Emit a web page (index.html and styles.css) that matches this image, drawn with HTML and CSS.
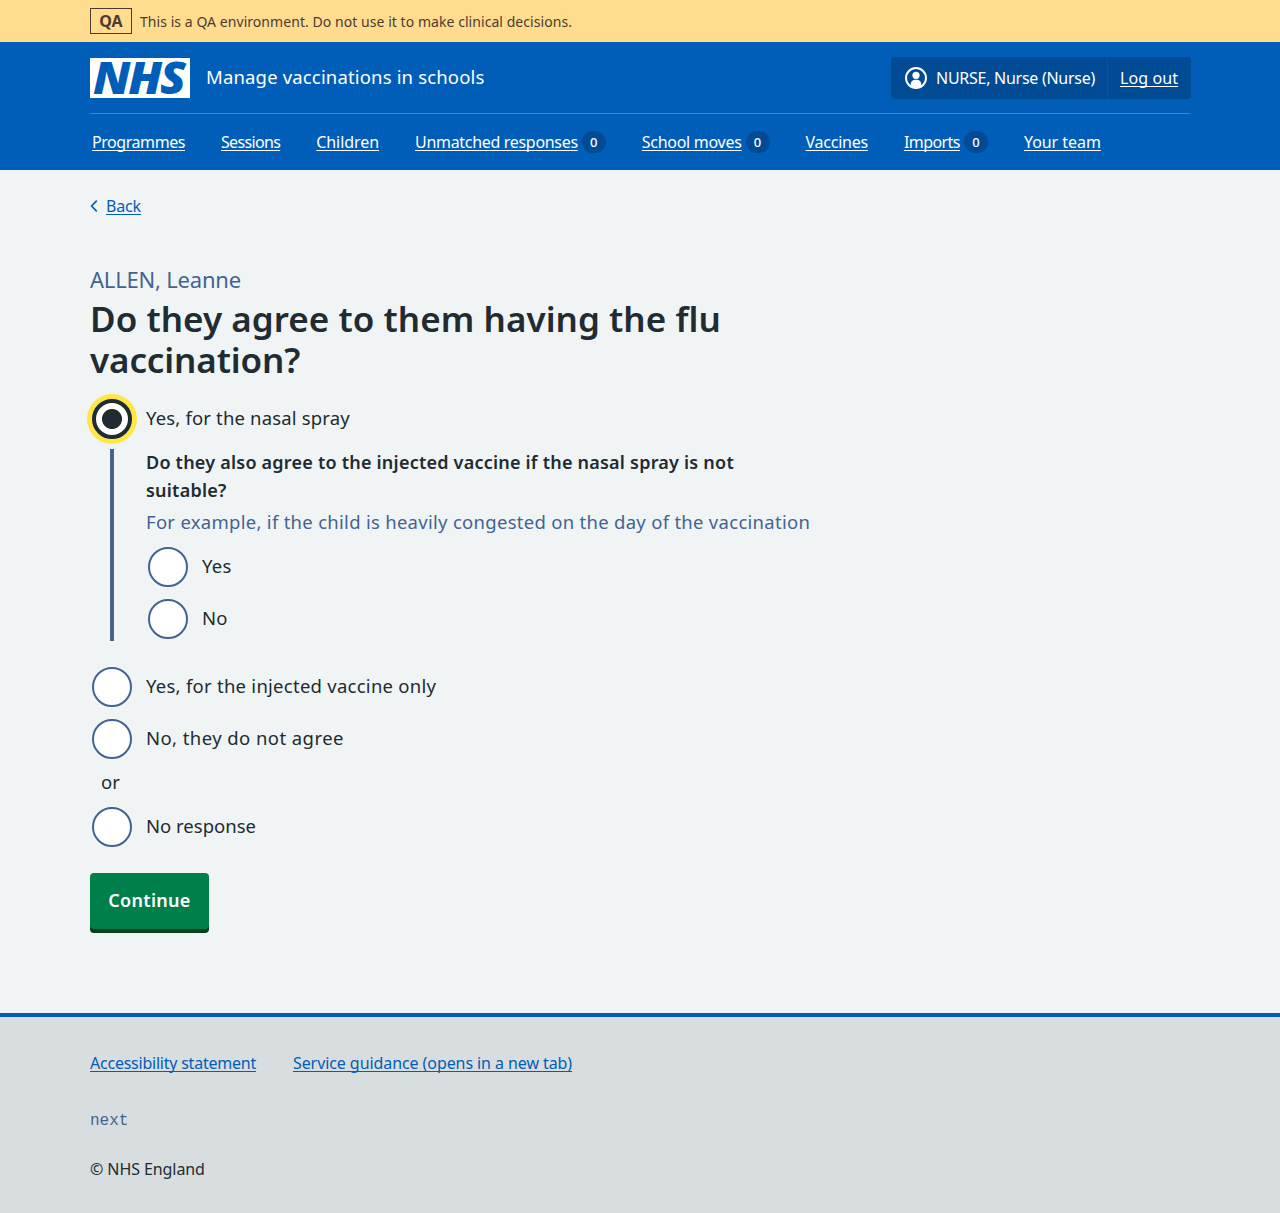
FILE: index.html
```html
<!DOCTYPE html>
<html lang="en">
<head>
<meta charset="utf-8">
<title>Do they agree to them having the flu vaccination?</title>
<link rel="stylesheet" href="styles.css">
</head>
<body>
<div class="env">
  <div class="container env-inner">
    <strong class="env-tag">QA</strong>
    <span class="env-text">This is a QA environment. Do not use it to make clinical decisions.</span>
  </div>
</div>
<header class="header">
  <div class="container">
    <div class="header-top">
      <svg class="logo" viewBox="0 0 100 40" width="100" height="40" role="img" aria-label="NHS">
        <rect width="100" height="40" fill="#fff"/>
        <text class="logo-text" x="3" y="36" textLength="91" lengthAdjust="spacingAndGlyphs">NHS</text>
      </svg>
      <span class="service">Manage vaccinations in schools</span>
      <div class="account">
        <div class="account-user">
          <svg width="22" height="22" viewBox="0 0 22 22" aria-hidden="true">
            <circle cx="11" cy="11" r="10" fill="none" stroke="#fff" stroke-width="2"/>
            <circle cx="11" cy="8.3" r="3.6" fill="#fff"/>
            <path d="M5.8 19.500V17a4.200 4.200 0 0 1 4.200-4.200h2a4.200 4.200 0 0 1 4.200 4.200v2.500L11 21.500z" fill="#fff"/>
          </svg>
          <span class="account-name">NURSE, Nurse (Nurse)</span>
        </div>
        <a class="account-out" href="#">Log out</a>
      </div>
    </div>
    <nav class="nav">
      <span class="nav-item"><a class="n1" href="#">Programmes</a></span>
      <span class="nav-item"><a class="n2" href="#">Sessions</a></span>
      <span class="nav-item"><a class="n3" href="#">Children</a></span>
      <span class="nav-item"><a class="n4" href="#">Unmatched responses</a><span class="count">0</span></span>
      <span class="nav-item"><a class="n5" href="#">School moves</a><span class="count">0</span></span>
      <span class="nav-item"><a class="n6" href="#">Vaccines</a></span>
      <span class="nav-item"><a class="n7" href="#">Imports</a><span class="count">0</span></span>
      <span class="nav-item"><a class="n8" href="#">Your team</a></span>
    </nav>
  </div>
</header>
<main class="container main">
  <div class="back">
    <svg width="8" height="12" viewBox="0 0 8 12" aria-hidden="true"><path d="M6.300 1.200 1.500 6l4.800 4.800" fill="none" stroke="#005eb8" stroke-width="1.700" stroke-linecap="round" stroke-linejoin="round"/></svg>
    <a href="#">Back</a>
  </div>
  <form class="form">
    <span class="caption">ALLEN, Leanne</span>
    <h1 class="title">Do they agree to them having the flu <span class="title-end">vaccination?</span></h1>
    <div class="radios">
      <label class="radio"><span class="dot dot-checked"></span><span class="label r1">Yes, for the nasal spray</span></label>
      <div class="conditional">
        <h2 class="question">Do they also agree to the injected vaccine if the nasal spray is not suitable?</h2>
        <div class="hint">For example, if the child is heavily congested on the day of the vaccination</div>
        <div class="nested">
          <label class="radio"><span class="dot"></span><span class="label">Yes</span></label>
          <label class="radio"><span class="dot"></span><span class="label">No</span></label>
        </div>
      </div>
      <label class="radio"><span class="dot"></span><span class="label r2">Yes, for the injected vaccine only</span></label>
      <label class="radio"><span class="dot"></span><span class="label r3">No, they do not agree</span></label>
      <div class="or">or</div>
      <label class="radio"><span class="dot"></span><span class="label r4">No response</span></label>
    </div>
    <button class="button" type="button">Continue</button>
  </form>
</main>
<footer class="footer">
  <div class="container">
    <div class="footer-links">
      <a class="f1" href="#">Accessibility statement</a>
      <a class="f2" href="#">Service guidance (opens in a new tab)</a>
    </div>
    <div class="version">next</div>
    <div class="copyright">© NHS England</div>
  </div>
</footer>
</body>
</html>
```
FILE: styles.css
```css
* { box-sizing: border-box; }
body {
  margin: 0;
  background: #f0f4f5;
  color: #212b32;
  font-family: "Noto Sans", "Open Sans", sans-serif;
  font-size: 18.5px;
  line-height: 28px;
}
a { color: #005eb8; text-underline-offset: 2px; text-decoration-thickness: 1px; text-decoration-skip-ink: none; }
.container { width: 1100px; margin: 0 auto; white-space: nowrap; }

.env { background: #ffdc8e; color: #4d3b33; }
.env-inner { display: flex; align-items: center; gap: 8px; height: 42px; }
.env-tag {
  width: 42px; height: 26px; border: 1px solid #4d3b33;
  font-size: 16px; font-weight: 700; line-height: 25px; text-align: center;
}
.env-text { padding-top: 2px; font-size: 14px; line-height: 20px; letter-spacing: .055px; }

.header { background: #005eb8; color: #fff; height: 128px; }
.header a { color: #fff; }
.header-top { display: flex; align-items: center; height: 72px; border-bottom: 1px solid #3d84cb; }
.logo { display: block; overflow: visible; }
.logo-text { font: italic 800 45px "Open Sans", sans-serif; letter-spacing: -2px; fill: #005eb8; }
.service { margin-left: 16px; padding-bottom: 2px; letter-spacing: .16px; }
.account {
  display: flex; height: 42px; margin: 0 -1px 0 auto; width: 300px;
  background: #004b93; border-radius: 4px; font-size: 16px;
}
.account-user { display: flex; align-items: center; gap: 9px; padding-left: 14px; width: 217px; border-right: 1px solid #0055a6; }
.account-name { letter-spacing: -.27px; }
.account-out { padding-left: 12px; line-height: 42px; letter-spacing: .1px; }

.nav { display: flex; gap: 36px; padding-left: 2px; height: 56px; align-items: center; font-size: 16px; }
.nav-item { display: flex; align-items: center; gap: 4px; }
.n1 { letter-spacing: -.44px; }
.n2 { letter-spacing: -.66px; }
.n3 { letter-spacing: -.06px; }
.n4 { letter-spacing: -.31px; }
.n5 { letter-spacing: -.28px; }
.n6 { letter-spacing: -.25px; }
.n7 { letter-spacing: -.56px; }
.n8 { letter-spacing: -.05px; }
.count {
  width: 24px; height: 22px; border-radius: 11px; background: #004b93;
  font-size: 13px; font-weight: 500; line-height: 23px; text-align: center;
}

.main { height: 843px; padding-top: 22px; }
.back { display: flex; align-items: center; gap: 8px; font-size: 16px; letter-spacing: -.15px; }
.form { padding-top: 43px; }
.caption { display: block; font-size: 22px; line-height: 32px; letter-spacing: -.2px; color: #436490; }
.title {
  width: 700px; margin: 3px 0 19px; white-space: normal;
  font-size: 35px; line-height: 41px; font-weight: 600; letter-spacing: .05px;
}
.title-end { letter-spacing: -.12px; }

.radio { display: flex; align-items: center; gap: 14px; height: 40px; margin: 0 0 12px 2px; }
.label { padding-bottom: 2px; letter-spacing: .26px; }
.r1 { letter-spacing: .16px; }
.r3 { letter-spacing: .43px; }
.r4 { letter-spacing: 0; }
.dot { flex: none; width: 40px; height: 40px; border: 2px solid #436490; border-radius: 50%; background: #fff; }
.dot-checked {
  border: 4px solid #212b32;
  background: radial-gradient(circle, #212b32 9.600px, #fff 10.400px);
  box-shadow: 0 0 0 5px #ffe642;
}
.conditional {
  display: flex; flex-direction: column; height: 192px; margin: -2px 0 26px 20px;
  border-left: 4px solid #436490; padding-left: 32px;
}
.question {
  width: 640px; margin: -1px 0 0; white-space: normal;
  font-size: 18px; line-height: 28px; font-weight: 600; letter-spacing: .22px;
}
.hint { margin-top: 4px; color: #436490; letter-spacing: .285px; }
.nested { padding-top: 11px; }
.or { margin: -3px 0 11px 11px; letter-spacing: .1px; }
.button {
  display: block; width: 119px; height: 56px; margin-top: 26px; padding: 0 0 2px; border: 0; border-radius: 4px;
  background: #007f4a; box-shadow: 0 4px 0 #00401e; color: #fff;
  font: 600 18px/28px "Noto Sans", sans-serif; letter-spacing: .3px;
}

.footer { height: 200px; border-top: 4px solid #005eb8; background: #d8dde0; font-size: 16px; }
.footer-links { display: flex; gap: 37px; padding-top: 32px; }
.f1 { letter-spacing: -.23px; }
.f2 { letter-spacing: -.08px; }
.version { margin-top: 30px; font: 16px/28px "Liberation Mono", monospace; color: #436490; }
.copyright { margin-top: 20px; letter-spacing: -.08px; }
```
